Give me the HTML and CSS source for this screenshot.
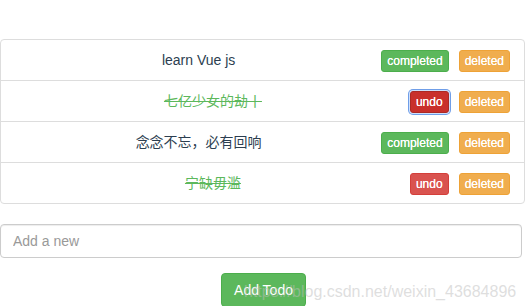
FILE: index.html
```html
<!DOCTYPE html>
<html lang="zh-CN">
<head>
  <meta charset="UTF-8" />
  <meta name="viewport" content="width=device-width, initial-scale=1.0" />
  <title>Todo List</title>
  <link rel="stylesheet" href="styles.css">
</head>
<body>
  <div id="app">
    <ul class="list-group">
      <li class="list-group-item">
        <div class="actions">
          <button class="btn btn-success">completed</button>
          <button class="btn btn-warning">deleted</button>
        </div>
        <span class="todo">learn Vue js</span>
      </li>
      <li class="list-group-item">
        <div class="actions">
          <button class="btn btn-danger focus">undo</button>
          <button class="btn btn-warning">deleted</button>
        </div>
        <span class="todo done">七亿少女的劫丨</span>
      </li>
      <li class="list-group-item">
        <div class="actions">
          <button class="btn btn-success">completed</button>
          <button class="btn btn-warning">deleted</button>
        </div>
        <span class="todo">念念不忘，必有回响</span>
      </li>
      <li class="list-group-item">
        <div class="actions">
          <button class="btn btn-danger">undo</button>
          <button class="btn btn-warning">deleted</button>
        </div>
        <span class="todo done">宁缺毋滥</span>
      </li>
    </ul>

    <input class="form-control" type="text" placeholder="Add a new" />

    <div class="add-row">
      <button class="btn-add">Add Todo</button>
      <!-- csdn 水印 -->
      <span class="watermark">https://blog.csdn.net/weixin_43684896</span>
    </div>
  </div>
</body>
</html>
```

FILE: styles.css
```css
* {
  box-sizing: border-box;
}

body {
  margin: 0;
  font-family: "Liberation Sans", Arial, "Noto Sans CJK SC", sans-serif;
  font-size: 14px;
  line-height: 20px;
  color: #2c3e50;
  background: #fff;
}

#app {
  width: 525px;
  padding-top: 39px;
}

.list-group {
  list-style: none;
  margin: 0 0 20px;
  padding: 0;
}

.list-group-item {
  position: relative;
  display: block;
  padding: 10px 15px;
  margin-bottom: -1px;
  border: 1px solid #ddd;
  text-align: center;
  height: 42px;
}

.list-group-item:first-child {
  border-top-left-radius: 4px;
  border-top-right-radius: 4px;
}

.list-group-item:last-child {
  margin-bottom: 0;
  border-bottom-left-radius: 4px;
  border-bottom-right-radius: 4px;
}

.actions {
  float: right;
  display: flex;
  gap: 10px;
  margin-right: -1px;
}

.done {
  color: #5cb85c;
  text-decoration: line-through;
}

.btn {
  font-family: "Liberation Sans", Arial, sans-serif;
  font-size: 12px;
  line-height: 18px;
  height: 22px;
  padding: 1px 5px;
  border: 1px solid transparent;
  border-radius: 3px;
  color: #fff;
  cursor: pointer;
  text-shadow: 0 0 0.4px #fff;
}

.btn-success {
  background: #5cb85c;
  border-color: #4cae4c;
}

.btn-warning {
  background: #f0ad4e;
  border-color: #eea236;
}

.btn-danger {
  background: #d9534f;
  border-color: #d43f3a;
}

.btn-danger.focus {
  background: #c9302c;
  border-color: #ac2925;
  box-shadow: 0 0 0 1px #cfe0fb, 0 0 0 2px #6f9ee8;
}

.form-control {
  display: block;
  width: 522px;
  height: 34px;
  padding: 6px 12px;
  font-family: "Liberation Sans", Arial, sans-serif;
  font-size: 14px;
  color: #555;
  border: 1px solid #ccc;
  border-radius: 4px;
  box-shadow: inset 0 1px 1px rgba(0, 0, 0, 0.075);
}

.form-control::placeholder {
  color: #999;
}

.add-row {
  position: relative;
  width: 527px;
  display: flex;
  justify-content: center;
  margin-top: 15px;
}

.btn-add {
  font-family: "Liberation Sans", Arial, sans-serif;
  font-size: 14px;
  line-height: 20px;
  height: 34px;
  padding: 6px 12px;
  color: #fff;
  background: #5cb85c;
  border: 1px solid #4cae4c;
  border-radius: 4px;
}

.watermark {
  position: absolute;
  left: 244px;
  top: 9px;
  font-family: "Liberation Sans", Arial, sans-serif;
  font-size: 16px;
  color: rgba(190, 190, 190, 0.5);
  white-space: nowrap;
  pointer-events: none;
}
```
